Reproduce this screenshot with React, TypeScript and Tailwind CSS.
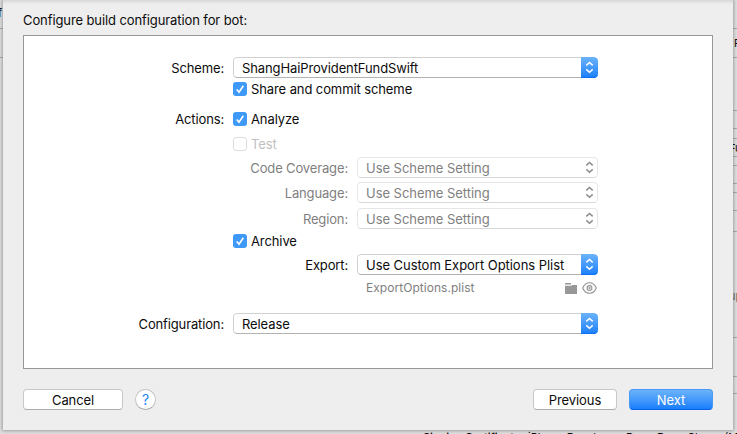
import type { ReactNode } from "react";

function Chevrons({ color }: { color: string }) {
  return (
    <svg width="17" height="21" viewBox="0 0 17 21" fill="none" stroke={color} strokeWidth="1.5">
      <path d="M5.3 8.4 8.5 5.5l3.2 2.9M5.3 12.4l3.2 2.9 3.2-2.9" />
    </svg>
  );
}

function Popup({ children, wide = false, disabled = false }: { children: ReactNode; wide?: boolean; disabled?: boolean }) {
  return (
    <div className={`flex h-[21px] overflow-hidden rounded-[4px] bg-white ${wide ? "w-[365px] tracking-[-0.1px]" : "w-[241px] tracking-[-0.04px]"}`}>
      <div
        className={`flex min-w-0 flex-1 items-center border pl-2 ${
          disabled
            ? "rounded-[4px] border-[#e6e6e6] border-b-[#d8d8d8] text-[#7f7f7f]"
            : "rounded-l-[4px] border-r-0 border-[#d0d0d0] border-b-[#b2b2b2]"
        }`}
      >
        <span className="flex-1">{children}</span>
        {disabled && (
          <span className="-mr-px">
            <Chevrons color="#8c8c8c" />
          </span>
        )}
      </div>
      {!disabled && (
        <div className="w-[17px] rounded-r-[4px] bg-linear-to-b from-[#6bb3fa] to-[#157efb] shadow-[inset_0_-1px_0_#0f6ff0]">
          <Chevrons color="#fff" />
        </div>
      )}
    </div>
  );
}

function Check({ children, off = false }: { children: ReactNode; off?: boolean }) {
  return (
    <div className="flex h-[14px] items-center">
      {off ? (
        <span className="h-[14px] w-[14px] rounded-[3px] border border-[#dedede] bg-white" />
      ) : (
        <svg width="14" height="14" viewBox="0 0 14 14">
          <rect width="14" height="14" rx="3" fill="#3f99f8" />
          <path d="M3.7 7.5 6 10.1l4.3-6.4" fill="none" stroke="#fff" strokeWidth="1.6" />
        </svg>
      )}
      <span className={`pl-1 ${off ? "text-[#bfbfbf]" : ""}`}>{children}</span>
    </div>
  );
}

function Row({ label, sub = false, dim = false, className, children }: { label?: string; sub?: boolean; dim?: boolean; className: string; children: ReactNode }) {
  return (
    <div className={`flex items-center ${className}`}>
      <span className={`mr-[9px] text-right tracking-[-0.14px] ${sub ? "w-[324px]" : "w-[200px]"} ${dim ? "text-[#7f7f7f]" : ""}`}>{label}</span>
      {children}
    </div>
  );
}

const rightLines = [28, 57, 110, 128, 138, 156, 165, 183, 192, 210, 231, 337, 376, 393];

export default function App() {
  return (
    <div className="relative h-[434px] w-[737px] overflow-hidden bg-[#dedede] font-['Inter','Liberation_Sans',sans-serif] text-[13px] leading-[14px] tracking-[-0.1px] text-[#0c0c0c]">
      {[28, 57].map((y) => (
        <i key={y} className="absolute left-0 h-px w-[3px] bg-[#aaa]" style={{ top: y }} />
      ))}
      {rightLines.map((y) => (
        <i key={y} className="absolute right-0 h-px w-1 bg-[#aaa]" style={{ top: y }} />
      ))}
      <span className="absolute -left-[2px] top-[6px] text-[11px]">f</span>
      <span className="absolute left-[734px] top-[36px] text-[11px]">P</span>
      <span className="absolute left-[729px] top-[141px] text-[11px]">Fu</span>
      <span className="absolute left-[729px] top-[289px] text-[11px] text-[#666]">up</span>
      <span className="absolute left-[423px] top-[430px] whitespace-nowrap text-[11px] font-semibold">
        Signing Certificate
      </span>
      <span className="absolute left-[528px] top-[430px] whitespace-nowrap text-[11px] tracking-normal">
        iPhone Developer: Dong Dong Sheng (M9
      </span>

      <main className="relative ml-[3px] h-[430px] w-[730px] bg-[#eee] px-5 shadow-[0_0_3px_1px_rgba(0,0,0,0.28)]">
        <div className="absolute inset-x-0 top-0 h-1 bg-linear-to-b from-[#d6d6d6] to-[#eee]" />
        <h1 className="h-[35px] pt-[13px]">Configure build configuration for bot:</h1>

        <section className="h-[334px] border border-[#979797] bg-white pt-[21px]">
          <Row label="Scheme:" className="h-[21px]">
            <Popup wide>ShangHaiProvidentFundSwift</Popup>
          </Row>
          <Row className="mt-1 h-[14px]">
            <Check>Share and commit scheme</Check>
          </Row>
          <Row label="Actions:" className="mt-4 h-[14px]">
            <Check>Analyze</Check>
          </Row>
          <Row className="mt-[11px] h-[14px]">
            <Check off>Test</Check>
          </Row>
          <Row sub dim label="Code Coverage:" className="mt-1.5 h-[21px]">
            <Popup disabled>Use Scheme Setting</Popup>
          </Row>
          <Row sub dim label="Language:" className="mt-1 h-[21px]">
            <Popup disabled>Use Scheme Setting</Popup>
          </Row>
          <Row sub dim label="Region:" className="mt-[5px] h-[21px]">
            <Popup disabled>Use Scheme Setting</Popup>
          </Row>
          <Row className="mt-[5px] h-[14px]">
            <Check>Archive</Check>
          </Row>
          <Row sub label="Export:" className="mt-1.5 h-[21px]">
            <Popup>Use Custom Export Options Plist</Popup>
          </Row>
          <Row sub className="mt-1.5 h-[14px]">
            <div className="flex w-[240px] items-center pl-[9px] text-[#808080]">
              <span className="flex-1 text-[12px] tracking-[0.04px]">ExportOptions.plist</span>
              <svg width="12" height="11" viewBox="0 0 12 11" fill="#979797">
                <path d="M0 0h6v1.5H0zM0 2.7h6.5L7.3 2H12v9H0z" />
              </svg>
              <svg className="ml-[5px]" width="15" height="12" viewBox="0 0 15 12" fill="none" stroke="#929292" strokeWidth="1.1">
                <path d="M.7 6C2.2 2.5 4.6.8 7.5.8S12.8 2.5 14.3 6c-1.5 3.5-3.9 5.2-6.8 5.2S2.2 9.5.7 6Z" />
                <circle cx="7.5" cy="6" r="2.4" />
                <circle cx="7.5" cy="6" r=".5" fill="#929292" />
              </svg>
            </div>
          </Row>
          <Row label="Configuration:" className="mt-[18px] h-[21px]">
            <Popup wide>Release</Popup>
          </Row>
        </section>

        <footer className="mt-5 flex h-[21px]">
          <button className="w-[100px] rounded-[4px] border border-[#c8c8c8] border-b-[#acacac] bg-white">Cancel</button>
          <button className="ml-3 w-[21px] rounded-full border border-[#c4c4c4] border-b-[#aaa] bg-white text-[14px] text-[#1d84fb]">?</button>
          <button className="ml-auto w-[84px] rounded-[4px] border border-[#c8c8c8] border-b-[#acacac] bg-white">Previous</button>
          <button className="ml-3 w-[84px] rounded-[4px] border border-[#4a9bf5] border-b-[#0a60e8] bg-linear-to-b from-[#6bb3fa] to-[#157efb] text-white">
            Next
          </button>
        </footer>
      </main>
    </div>
  );
}
